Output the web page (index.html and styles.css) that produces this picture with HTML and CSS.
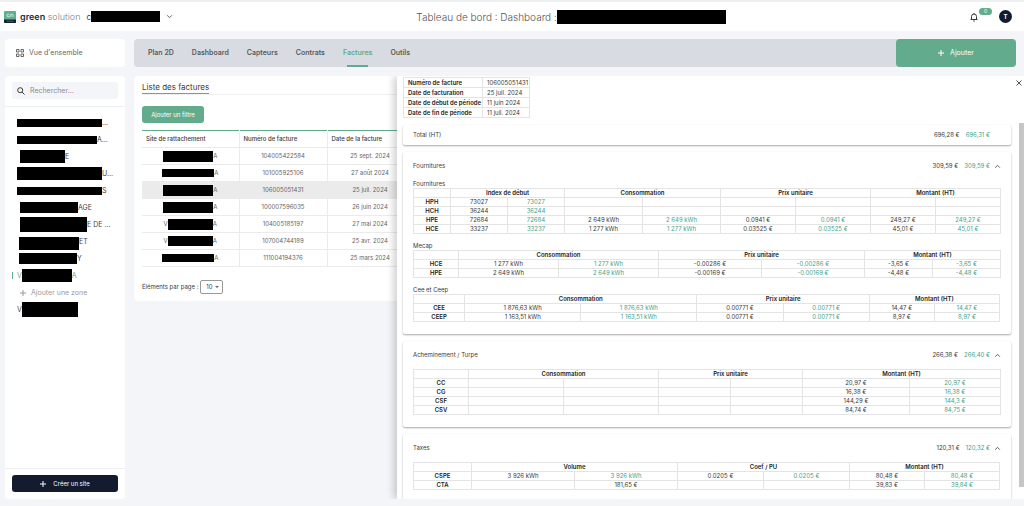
FILE: index.html
```html
<!DOCTYPE html>
<html lang="fr">
<head>
<meta charset="utf-8">
<meta name="viewport" content="width=device-width, initial-scale=1">
<title>Tableau de bord</title>
<link rel="stylesheet" href="styles.css">
</head>
<body>
<header class="topbar">
  <div class="brand">
    <svg class="logo" viewBox="0 0 12 12" aria-hidden="true"><rect width="12" height="12" rx="1" fill="#5fae8e"/><path d="M0 8.5h12V11a1 1 0 0 1-1 1H1a1 1 0 0 1-1-1z" fill="#14202f"/><path d="M5.300 3.200H3.600a.6.6 0 0 0-.6.6v1.400a.6.6 0 0 0 .6.6h1.700V4.600M6.800 5.900V3.200h1.600a.6.6 0 0 1 .6.6v2.100" fill="none" stroke="#e4f3ec" stroke-width=".8"/><path d="M2.500 10.200h7" stroke="#5d6b78" stroke-width=".8"/></svg>
    <span class="brand-name"><b>green</b> solution</span>
    <button class="site-picker" aria-label="Choisir un site"><span>c</span><i class="mask mask-site"></i><svg class="chevron" viewBox="0 0 6 6"><path d="M1 2l2 2 2-2"/></svg></button>
  </div>
  <h1 class="title">Tableau de bord : Dashboard : <i class="mask mask-title"></i></h1>
  <div class="account">
    <button class="bell" aria-label="Notifications"><svg viewBox="0 0 10 10"><path d="M1.500 7.500h7M2.500 7.500V4.500a2.500 2.500 0 0 1 5 0v3M5 2V1M4.200 9h1.600"/></svg><span class="badge">0</span></button>
    <button class="avatar">T</button>
  </div>
</header>

<div class="content">
  <a class="overview" href="#"><svg viewBox="0 0 8 8"><path d="M.5.5h2.500v2.500H.5zM5 .5h2.500v2.500H5zM.5 5h2.500v2.500H.5zM5 5h2.500v2.500H5z"/></svg>Vue d'ensemble</a>

  <div class="toolbar">
    <nav class="tabs">
      <a href="#">Plan 2D</a><a href="#">Dashboard</a><a href="#">Capteurs</a><a href="#">Contrats</a><a href="#" class="active">Factures</a><a href="#">Outils</a>
    </nav>
    <button class="add"><svg class="plus" viewBox="0 0 6 6"><path d="M3 0v6M0 3h6"/></svg>Ajouter</button>
  </div>

  <aside class="sidebar">
    <div class="search">
      <label class="field"><svg viewBox="0 0 8 8"><circle cx="3.200" cy="3.200" r="2.500"/><path d="M5 5l2.500 2.500"/></svg><input type="search" placeholder="Rechercher..." aria-label="Rechercher"></label>
    </div>
    <ul class="sites">
      <li><i class="mask w85 h8"></i>...</li>
      <li><i class="mask w80 h8"></i>A...</li>
      <li class="in"><i class="mask w45 h13"></i>E</li>
      <li><i class="mask w85 h13"></i>U...</li>
      <li><i class="mask w85 h8"></i>S</li>
      <li class="in"><i class="mask w58 h11"></i>AGE</li>
      <li class="in"><i class="mask w67 h15"></i>E DE ...</li>
      <li class="mid"><i class="mask w60 h13 low"></i>ET</li>
      <li class="mid"><i class="mask w58 h11"></i>Y</li>
      <li class="current">V<i class="mask w50 h13"></i>A</li>
      <li class="zone"><button><svg class="plus" viewBox="0 0 6 6"><path d="M3 0v6M0 3h6"/></svg>Ajouter une zone</button></li>
      <li>V<i class="mask w56 h15"></i></li>
    </ul>
    <div class="create"><button><svg class="plus" viewBox="0 0 6 6"><path d="M3 0v6M0 3h6"/></svg>Créer un site</button></div>
  </aside>

  <main class="invoices">
    <h2><span>Liste des factures</span></h2>
    <button class="filter">Ajouter un filtre</button>
    <table class="list">
      <colgroup><col class="c-site"><col class="c-num"><col class="c-date"><col></colgroup>
      <thead><tr><th>Site de rattachement</th><th>Numéro de facture</th><th>Date de la facture</th><th></th></tr></thead>
      <tbody>
        <tr><td><div><i class="mask w50 h11"></i>A</div></td><td>104005422584</td><td>25 sept. 2024</td><td></td></tr>
        <tr><td><div><i class="mask w52 h8"></i>A</div></td><td>101005925106</td><td>27 août 2024</td><td></td></tr>
        <tr class="selected"><td><div><i class="mask w50 h11"></i>A</div></td><td>106005051431</td><td>25 juil. 2024</td><td></td></tr>
        <tr><td><div><i class="mask w50 h11"></i>A</div></td><td>100007596035</td><td>26 juin 2024</td><td></td></tr>
        <tr><td><div>V<i class="mask w45 h11"></i>A</div></td><td>104005185197</td><td>27 mai 2024</td><td></td></tr>
        <tr><td><div>V<i class="mask w45 h10"></i>A</div></td><td>107004744189</td><td>25 avr. 2024</td><td></td></tr>
        <tr><td><div><i class="mask w52 h8"></i>A</div></td><td>111004194376</td><td>25 mars 2024</td><td></td></tr>
      </tbody>
    </table>
    <div class="pager">
      <label for="per-page">Éléments par page :</label>
      <span class="select"><select id="per-page"><option>10</option></select><svg class="caret" viewBox="0 0 6 6"><path d="M1 2h4L3 4z"/></svg></span>
    </div>
  </main>

  <section class="drawer">
    <table class="meta">
      <tr><th>Numéro de facture</th><td>106005051431</td></tr>
      <tr><th>Date de facturation</th><td>25 juil. 2024</td></tr>
      <tr><th>Date de début de période</th><td>11 juin 2024</td></tr>
      <tr><th>Date de fin de période</th><td>11 juil. 2024</td></tr>
    </table>

    <article class="card total">
      <header><h3>Total (HT)</h3><span>696,28 €</span><span class="calc">696,31 €</span></header>
    </article>

    <article class="card">
      <header><h3>Fournitures</h3><span>309,59 €</span><span class="calc">309,59 €</span><button aria-label="Replier"><svg class="chevron" viewBox="0 0 6 6"><path d="M1 4l2-2 2 2"/></svg></button></header>
      <h4>Fournitures</h4>
      <table class="detail t-supply">
        <colgroup><col><col><col><col><col><col><col><col><col></colgroup>
        <tr><th></th><th colspan="2">Index de début</th><th colspan="2">Consommation</th><th colspan="2">Prix unitaire</th><th colspan="2">Montant (HT)</th></tr>
        <tr><th>HPH</th><td>73027</td><td class="calc">73027</td><td></td><td></td><td></td><td></td><td></td><td></td></tr>
        <tr><th>HCH</th><td>36244</td><td class="calc">36244</td><td></td><td></td><td></td><td></td><td></td><td></td></tr>
        <tr><th>HPE</th><td>72684</td><td class="calc">72684</td><td>2 649 kWh</td><td class="calc">2 649 kWh</td><td>0.0941 €</td><td class="calc">0.0941 €</td><td>249,27 €</td><td class="calc">249,27 €</td></tr>
        <tr><th>HCE</th><td>33237</td><td class="calc">33237</td><td>1 277 kWh</td><td class="calc">1 277 kWh</td><td>0.03525 €</td><td class="calc">0.03525 €</td><td>45,01 €</td><td class="calc">45,01 €</td></tr>
      </table>
      <h4>Mecap</h4>
      <table class="detail t-mecap">
        <colgroup><col><col><col><col><col><col><col></colgroup>
        <tr><th></th><th colspan="2">Consommation</th><th colspan="2">Prix unitaire</th><th colspan="2">Montant (HT)</th></tr>
        <tr><th>HCE</th><td>1 277 kWh</td><td class="calc">1 277 kWh</td><td>-0.00286 €</td><td class="calc">-0.00286 €</td><td>-3,65 €</td><td class="calc">-3,65 €</td></tr>
        <tr><th>HPE</th><td>2 649 kWh</td><td class="calc">2 649 kWh</td><td>-0.00169 €</td><td class="calc">-0.00169 €</td><td>-4,48 €</td><td class="calc">-4,48 €</td></tr>
      </table>
      <h4>Cee et Ceep</h4>
      <table class="detail t-cee">
        <colgroup><col><col><col><col><col><col><col></colgroup>
        <tr><th></th><th colspan="2">Consommation</th><th colspan="2">Prix unitaire</th><th colspan="2">Montant (HT)</th></tr>
        <tr><th>CEE</th><td>1 876,63 kWh</td><td class="calc">1 876,63 kWh</td><td>0.00771 €</td><td class="calc">0.00771 €</td><td>14,47 €</td><td class="calc">14,47 €</td></tr>
        <tr><th>CEEP</th><td>1 163,51 kWh</td><td class="calc">1 163,51 kWh</td><td>0.00771 €</td><td class="calc">0.00771 €</td><td>8,97 €</td><td class="calc">8,97 €</td></tr>
      </table>
    </article>

    <article class="card">
      <header><h3>Acheminement / Turpe</h3><span>266,38 €</span><span class="calc">266,40 €</span><button aria-label="Replier"><svg class="chevron" viewBox="0 0 6 6"><path d="M1 4l2-2 2 2"/></svg></button></header>
      <table class="detail t-turpe">
        <colgroup><col><col><col><col><col><col><col></colgroup>
        <tr><th></th><th colspan="2">Consommation</th><th colspan="2">Prix unitaire</th><th colspan="2">Montant (HT)</th></tr>
        <tr><th>CC</th><td></td><td></td><td></td><td></td><td>20,97 €</td><td class="calc">20,97 €</td></tr>
        <tr><th>CG</th><td></td><td></td><td></td><td></td><td>16,38 €</td><td class="calc">16,38 €</td></tr>
        <tr><th>CSF</th><td></td><td></td><td></td><td></td><td>144,29 €</td><td class="calc">144,3 €</td></tr>
        <tr><th>CSV</th><td></td><td></td><td></td><td></td><td>84,74 €</td><td class="calc">84,75 €</td></tr>
      </table>
    </article>

    <article class="card">
      <header><h3>Taxes</h3><span>120,31 €</span><span class="calc">120,32 €</span><button aria-label="Replier"><svg class="chevron" viewBox="0 0 6 6"><path d="M1 4l2-2 2 2"/></svg></button></header>
      <table class="detail t-tax">
        <colgroup><col><col><col><col><col><col><col></colgroup>
        <tr><th></th><th colspan="2">Volume</th><th colspan="2">Coef / PU</th><th colspan="2">Montant (HT)</th></tr>
        <tr><th>CSPE</th><td>3 926 kWh</td><td class="calc">3 926 kWh</td><td>0.0205 €</td><td class="calc">0.0205 €</td><td>80,48 €</td><td class="calc">80,48 €</td></tr>
        <tr><th>CTA</th><td></td><td>181,65 €</td><td></td><td></td><td>39,83 €</td><td class="calc">39,84 €</td></tr>
      </table>
    </article>

    <button class="close" aria-label="Fermer"><svg viewBox="0 0 6 6"><path d="M.5.5l5 5M5.500.5l-5 5"/></svg></button>
    <div class="scrollbar"></div>
  </section>
</div>
</body>
</html>
```
FILE: styles.css
```css
:root {
  --green: #62ac8d;
  --calc: #3fa38b;
  --navy: #131b2f;
  --ink: #3a3a3a;
  --page: #f3f5f9;
  --line: #e4e4e4;
}
* { box-sizing: border-box; }
body {
  margin: 0;
  font: 6px/8px Inter, "Liberation Sans", sans-serif;
  color: var(--ink);
  background: var(--page);
  min-height: 100vh;
  display: flex;
  flex-direction: column;
}
button, input, select { font: inherit; color: inherit; border: 0; background: none; padding: 0; margin: 0; }
button { display: flex; align-items: center; justify-content: center; }
a { color: inherit; text-decoration: none; }
h1, h2, h3, h4 { margin: 0; font-size: 6px; font-weight: 400; }
svg { fill: none; stroke: currentColor; flex: none; }

.mask { display: block; background: #000; flex: none; }
.mask-site { width: 69px; height: 11px; }
.mask-title { width: 169px; height: 14px; }
.h8 { height: 8px; } .h10 { height: 10px; } .h11 { height: 11px; } .h13 { height: 13px; } .h15 { height: 15px; }
.w45 { width: 45px; } .w50 { width: 50px; } .w52 { width: 52px; } .w56 { width: 56px; } .w58 { width: 58px; }
.w60 { width: 60px; } .w67 { width: 67px; } .w80 { width: 80px; } .w85 { width: 85px; }
.chevron { width: 7px; height: 7px; stroke: #555; stroke-width: 0.8; }
.plus { width: 6px; height: 6px; stroke-width: 1; }

/* Top bar */
.topbar {
  display: flex;
  align-items: center;
  justify-content: space-between;
  height: 31px;
  padding: 0 12px 0 4px;
  background: #fff;
  border-top: 2px solid #eeeff1;
}
.brand { display: flex; align-items: center; }
.logo { width: 12px; height: 12px; stroke: none; }
.brand-name { margin: 0 6px 0 4px; font-size: 9px; line-height: 12px; color: #7d828a; font-weight: 300; }
.brand-name b { color: #1f2c38; font-weight: 600; }
.site-picker { font-size: 8px; }
.site-picker .chevron { margin-left: 6px; }
.title { display: flex; align-items: center; font-size: 10px; line-height: 14px; font-weight: 300; color: #555; }
.account { display: flex; align-items: center; gap: 6px; }
.bell { position: relative; padding-right: 14px; }
.bell svg { width: 10px; height: 10px; }
.badge {
  position: absolute;
  left: 10px;
  top: -4px;
  width: 13px;
  border-radius: 4px;
  background: var(--green);
  color: #fff;
  font-size: 5px;
  line-height: 7px;
}
.avatar { width: 13px; height: 13px; border-radius: 50%; background: var(--navy); color: #fff; font-weight: 700; }

/* Page grid */
.content {
  position: relative;
  flex: 1;
  display: grid;
  grid-template-columns: 120px 1fr;
  grid-template-rows: 28px 1fr;
  gap: 9px;
  padding: 8px 8px 7px 5px;
}
.overview {
  display: flex;
  align-items: center;
  gap: 5px;
  padding-left: 11px;
  border-radius: 4px;
  background: #fff;
  font-size: 7px;
  color: #666;
}
.overview svg { width: 8px; height: 8px; }
.toolbar { display: flex; border-radius: 4px; background: #d8dbe1; }
.tabs { flex: 1; display: flex; gap: 18px; padding-left: 14px; font-size: 7px; font-weight: 600; color: #5a5a5a; }
.tabs a { display: flex; align-items: center; position: relative; }
.tabs .active { color: var(--green); }
.tabs .active::after { content: ""; position: absolute; left: 4px; right: 4px; bottom: 0; height: 2px; background: var(--green); }
.add { width: 120px; gap: 6px; border-radius: 4px; background: var(--green); color: #fff; font-size: 7px; }

/* Sidebar */
.sidebar { display: flex; flex-direction: column; border-radius: 4px; background: #fff; }
.search { padding: 6px 7px 7px; border-bottom: 1px solid #eceef1; }
.field { display: flex; align-items: center; gap: 5px; height: 17px; padding-left: 5px; border-radius: 2px; background: #f4f5f8; }
.field svg { width: 8px; height: 8px; }
.field input { flex: 1; min-width: 0; font-size: 7px; outline: 0; }
.field input::placeholder { color: #8a8a8a; }
.sites { flex: 1; list-style: none; margin: 0; padding: 7px 0 0 12px; font-size: 7px; color: #444; }
.sites li { display: flex; align-items: center; height: 17px; white-space: nowrap; }
.sites .in { padding-left: 3px; }
.sites .mid { padding-left: 2px; }
.sites .low { align-self: flex-end; }
.sites .current { color: var(--green); position: relative; }
.sites .current::before { content: ""; position: absolute; left: -5px; height: 7px; border-left: 1px solid var(--green); }
.zone { color: #9a9a9a; padding-left: 3px; }
.zone button { gap: 5px; }
.create { padding: 6px 7px 7px; border-top: 1px solid #eceef1; }
.create button { width: 100%; height: 17px; gap: 7px; border-radius: 3px; background: var(--navy); color: #fff; }

/* Invoice list */
.invoices { align-self: start; min-height: 225px; padding: 5px 8px; border-radius: 4px; background: #fff; }
.invoices h2 { display: flex; border-bottom: 1px solid #f0f0f0; font-size: 8px; line-height: 12px; }
.invoices h2 span { border-bottom: 1px solid var(--green); }
.filter { margin: 11px 0 7px; width: 62px; height: 17px; border-radius: 3px; background: var(--green); color: #fff; }
.list { width: 100%; table-layout: fixed; border-collapse: collapse; border-top: 1px solid var(--green); }
.c-site { width: 97px; } .c-num { width: 88px; } .c-date { width: 86px; }
.list th, .list td { height: 17px; padding: 0 4px; border: 1px solid #ebebeb; border-width: 0 1px 1px 0; text-align: center; color: #666; }
.list th { text-align: left; font-weight: 500; color: var(--ink); }
.list td div { display: flex; align-items: center; justify-content: center; }
.selected { background: #ebebeb; }
.pager { display: flex; align-items: center; gap: 2px; margin-top: 13px; }
.select { display: flex; align-items: center; position: relative; }
.select select { appearance: none; width: 23px; height: 14px; padding-left: 5px; border: 1px solid #999; border-radius: 2px; background: #fff; }
.caret { position: absolute; right: 3px; width: 6px; height: 6px; fill: #666; stroke: none; }

/* Invoice drawer */
.drawer {
  position: absolute;
  top: 45px;
  bottom: 7px;
  left: 397px;
  right: 0;
  overflow: hidden;
  padding: 1px 13px 0 6px;
  background: #fff;
  box-shadow: -3px 0 8px rgba(0, 0, 0, .2);
  clip-path: inset(0 0 0 -14px);
}
.meta, .detail { border-collapse: collapse; }
.meta { margin-bottom: 7px; }
.meta th, .meta td { padding: 0 1px 0 4px; border: 1px solid var(--line); line-height: 9px; text-align: left; }
.meta th { font-weight: 600; color: #222; }
.card { margin-bottom: 7px; padding: 0 11px 12px 10px; border-radius: 2px; background: #fff; box-shadow: 0 1px 2px rgba(0, 0, 0, .35); }
.card header { display: flex; align-items: center; gap: 6px; height: 28px; }
.card h3 { flex: 1; }
.card header button { width: 6px; margin-left: -2px; }
.total { padding-bottom: 0; padding-right: 21px; }
.total header { height: 20px; }
.card h4 { margin: 0 0 1px; line-height: 7px; }
.card table + h4 { margin-top: 8px; }
.calc { color: var(--calc); }
.detail { width: 100%; table-layout: fixed; }
.detail th, .detail td { height: 9px; padding: 0; border: 1px solid var(--line); line-height: 8px; text-align: center; }
.detail th { font-weight: 600; color: #222; }

.t-supply col:first-child { width: 37px; }
.t-supply col:nth-child(2), .t-supply col:nth-child(3) { width: 57px; }
.t-supply col:nth-child(4), .t-supply col:nth-child(5) { width: 78px; }
.t-supply col:nth-child(6), .t-supply col:nth-child(7) { width: 75px; }
.t-supply col:nth-child(n+8) { width: 65px; }
.t-mecap col { width: 103px; }
.t-mecap col:first-child { width: 45px; }
.t-mecap col:nth-child(2), .t-mecap col:nth-child(3) { width: 100px; }
.t-mecap col:nth-child(n+6) { width: 68px; }
.t-cee col { width: 86px; }
.t-cee col:first-child { width: 51px; }
.t-cee col:nth-child(2), .t-cee col:nth-child(3) { width: 116px; }
.t-cee col:nth-child(n+6) { width: 65px; }
.t-turpe col { width: 95px; }
.t-turpe col:first-child { width: 55px; }
.t-turpe col:nth-child(4), .t-turpe col:nth-child(5) { width: 72px; }
.t-turpe col:nth-child(6) { width: 107px; }
.t-turpe col:nth-child(7) { width: 91px; }
.t-tax col { width: 103px; }
.t-tax col:first-child { width: 58px; }
.t-tax col:nth-child(4), .t-tax col:nth-child(5) { width: 86px; }
.t-tax col:nth-child(n+6) { width: 75px; }

.close { position: absolute; top: 4px; right: 2px; width: 6px; height: 6px; color: #555; }
.close svg { width: 6px; height: 6px; }
.scrollbar { position: absolute; top: 47px; bottom: 12px; right: 0; width: 5px; background: #c6c6c6; }
```
